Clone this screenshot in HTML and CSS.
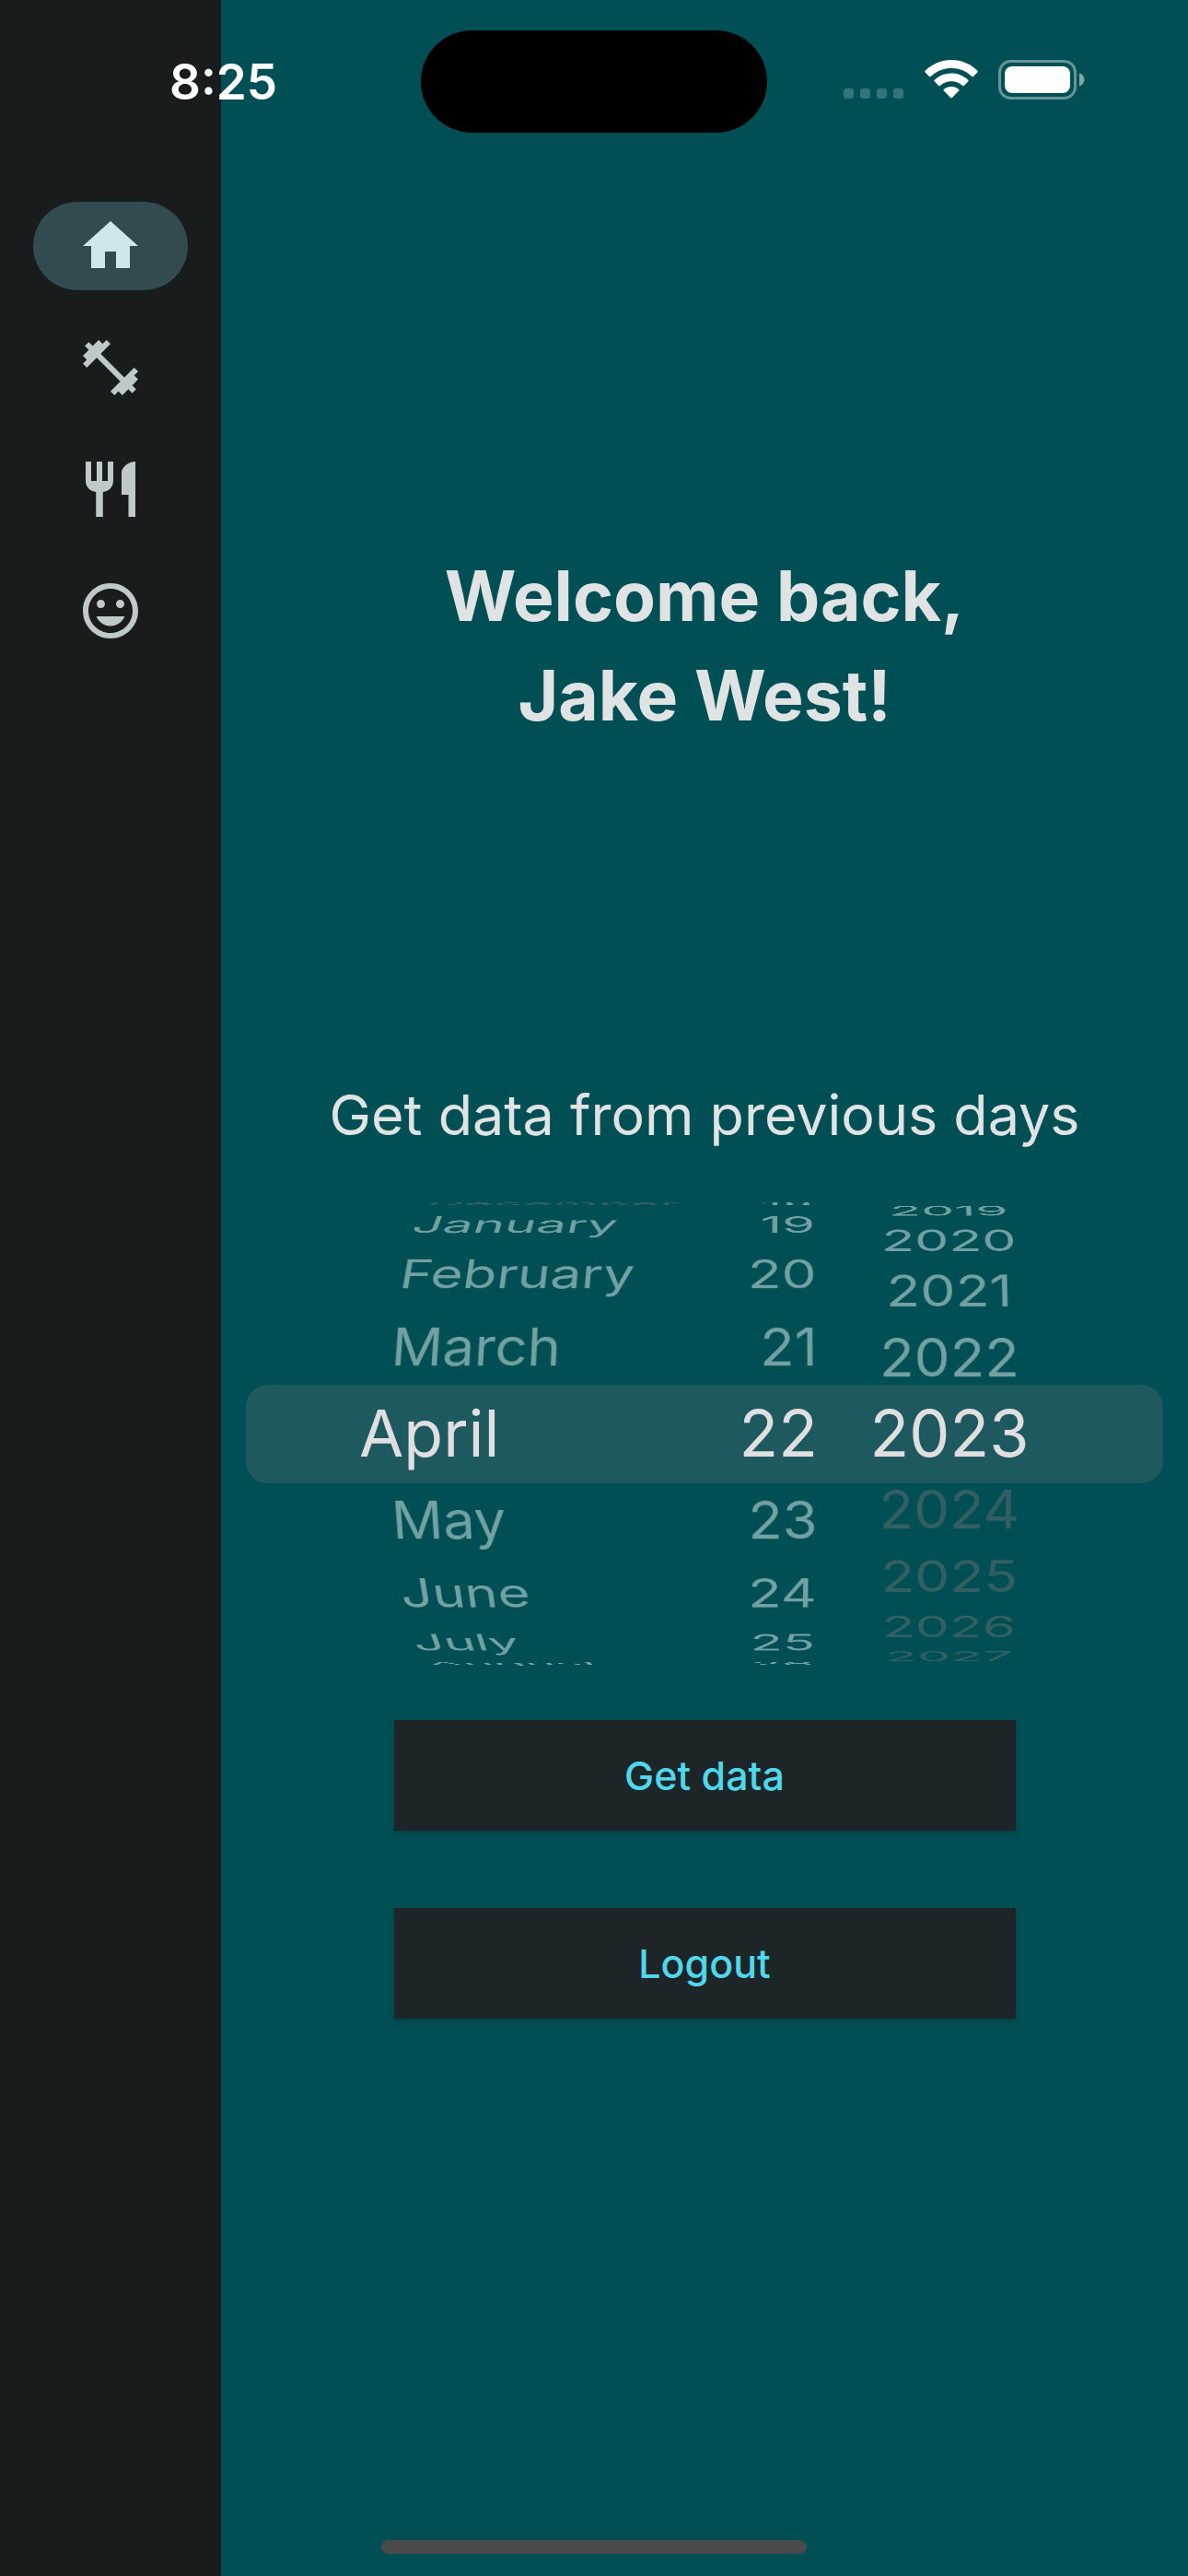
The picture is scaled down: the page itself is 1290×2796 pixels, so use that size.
FILE: index.html
```
<!DOCTYPE html>
<html lang="en">
<head>
<meta charset="utf-8">
<meta name="viewport" content="width=device-width, initial-scale=1">
<title>Home</title>
<link rel="stylesheet" href="styles.css">
</head>
<body>
<header class="status">
  <time class="status-time">8:25</time>
  <span class="island"></span>
  <div class="status-icons">
    <svg width="66" height="44" viewBox="0 0 66 44" aria-hidden="true"><g fill="#33737a"><rect x="0" y="31" width="11" height="11" rx="3"/><rect x="18" y="31" width="11" height="11" rx="3"/><rect x="36" y="31" width="11" height="11" rx="3"/><rect x="54" y="31" width="11" height="11" rx="3"/></g></svg>
    <svg width="58" height="44" viewBox="0 0 58 44" aria-hidden="true"><g fill="#fff"><path d="M29 0C18 0 8 4.500 .6 11.700q-.8.900 0 1.800L5 17.900q.8.800 1.700 0C12.700 12.200 20.500 9 29 9s16.300 3.200 22.300 8.900q.9.800 1.700 0l4.400-4.400q.8-.9 0-1.800C50 4.500 40 0 29 0z"/><path d="M29 14.500c-7 0-13.400 2.700-18.200 7.200q-.9.900 0 1.800l4.300 4.400q.8.800 1.700 0C20 25 24.300 23.300 29 23.300s9 1.700 12.200 4.600q.9.800 1.700 0l4.300-4.400q.9-.9 0-1.800C42.400 17.200 36 14.500 29 14.500z"/><path d="M29 29c-3 0-5.900 1.100-8.100 2.900q-1 .8-.1 1.700l7.300 7.500q.9.900 1.800 0l7.300-7.500q.9-.9-.1-1.700C34.900 30.100 32 29 29 29z"/></g></svg>
    <svg width="94" height="44" viewBox="0 0 94 44" aria-hidden="true"><rect x="1.500" y="1.500" width="82" height="40" rx="12" fill="none" stroke="#669599" stroke-width="3"/><rect x="7" y="7" width="71" height="29" rx="8" fill="#fff"/><path d="M88 14.500c3.500 1 5.500 3.800 5.500 7s-2 6-5.500 7z" fill="#80a7a9"/></svg>
  </div>
</header>

<div class="app">
  <nav class="rail" aria-label="Main">
    <a class="rail-link rail-link-active" href="#home" aria-label="Home" aria-current="page"><svg class="icon" viewBox="0 0 24 24"><path d="M10 20v-6h4v6h5v-8h3L12 3 2 12h3v8z"/></svg></a>
    <a class="rail-link" href="#workouts" aria-label="Workouts"><svg class="icon" viewBox="0 0 24 24"><path d="M20.570 14.860L22 13.430 20.570 12 17 15.570 8.430 7 12 3.430 10.570 2 9.140 3.430 7.710 2 5.570 4.140 4.140 2.710 2.710 4.140l1.430 1.430L2 7.710l1.430 1.430L2 10.570 3.430 12 7 8.430 15.570 17 12 20.570 13.430 22l1.430-1.430L16.290 22l2.140-2.140 1.430 1.430 1.430-1.430-1.430-1.430L22 16.290z"/></svg></a>
    <a class="rail-link" href="#meals" aria-label="Meals"><svg class="icon" viewBox="0 0 24 24"><path d="M11 9H9V2H7v7H5V2H3v7c0 2.120 1.660 3.840 3.750 3.970V22h2.500v-9.030C11.340 12.840 13 11.120 13 9V2h-2v7zm5-3v8h2.500v8H21V2c-2.760 0-5 2.240-5 4z"/></svg></a>
    <a class="rail-link" href="#mood" aria-label="Mood"><svg class="icon" viewBox="0 0 24 24"><path d="M11.990 2C6.470 2 2 6.480 2 12s4.470 10 9.990 10C17.520 22 22 17.520 22 12S17.520 2 11.990 2zM12 20c-4.420 0-8-3.580-8-8s3.580-8 8-8 8 3.580 8 8-3.580 8-8 8zm3.500-9c.83 0 1.500-.67 1.500-1.500S16.330 8 15.500 8 14 8.670 14 9.500s.67 1.500 1.500 1.500zm-7 0c.83 0 1.500-.67 1.500-1.500S9.330 8 8.500 8 7 8.670 7 9.500 7.670 11 8.500 11zm3.500 6.500c2.330 0 4.310-1.460 5.110-3.500H6.890c.8 2.040 2.780 3.500 5.110 3.500z"/></svg></a>
  </nav>

  <main class="main">
    <h1 class="welcome">Welcome back,<br>Jake West!</h1>
    <h2 class="subtitle" id="picker-label">Get data from previous days</h2>

    <div class="picker" role="group" aria-labelledby="picker-label">
      <div class="band"></div>
      <ul class="wheel wheel-month" role="listbox" aria-label="Month">
        <li class="row row-off" style="--n: 4" role="option" aria-disabled="true">December</li>
        <li class="row" style="--n: 3" role="option">January</li>
        <li class="row" style="--n: 2" role="option">February</li>
        <li class="row" style="--n: 1" role="option">March</li>
        <li class="row row-selected" style="--n: 0" role="option" aria-selected="true">April</li>
        <li class="row" style="--n: -1" role="option">May</li>
        <li class="row" style="--n: -2" role="option">June</li>
        <li class="row" style="--n: -3" role="option">July</li>
        <li class="row" style="--n: -4" role="option">August</li>
      </ul>
      <ul class="wheel wheel-day" role="listbox" aria-label="Day">
        <li class="row" style="--n: 4" role="option">18</li>
        <li class="row" style="--n: 3" role="option">19</li>
        <li class="row" style="--n: 2" role="option">20</li>
        <li class="row" style="--n: 1" role="option">21</li>
        <li class="row row-selected" style="--n: 0" role="option" aria-selected="true">22</li>
        <li class="row" style="--n: -1" role="option">23</li>
        <li class="row" style="--n: -2" role="option">24</li>
        <li class="row" style="--n: -3" role="option">25</li>
        <li class="row" style="--n: -4" role="option">26</li>
      </ul>
      <ul class="wheel wheel-year" role="listbox" aria-label="Year">
        <li class="row" style="--n: 4" role="option">2019</li>
        <li class="row" style="--n: 3" role="option">2020</li>
        <li class="row" style="--n: 2" role="option">2021</li>
        <li class="row" style="--n: 1" role="option">2022</li>
        <li class="row row-selected" style="--n: 0" role="option" aria-selected="true">2023</li>
        <li class="row row-off" style="--n: -1" role="option" aria-disabled="true">2024</li>
        <li class="row row-off" style="--n: -2" role="option" aria-disabled="true">2025</li>
        <li class="row row-off" style="--n: -3" role="option" aria-disabled="true">2026</li>
        <li class="row row-off" style="--n: -4" role="option" aria-disabled="true">2027</li>
      </ul>
    </div>

    <div class="actions">
      <button class="button" type="button">Get data</button>
      <button class="button" type="button">Logout</button>
    </div>
  </main>
</div>
<div class="home-indicator"></div>
</body>
</html>
```
FILE: styles.css
```
* {
  box-sizing: border-box;
}

body {
  margin: 0;
  background: #004f54;
  color: #e0e3e3;
  font-family: Inter, "Liberation Sans", sans-serif;
}

.app {
  display: flex;
  min-height: 100vh;
}

/* Status bar floats over both the rail and the page */
.status {
  position: absolute;
  top: 33px;
  left: 0;
  right: 0;
  display: grid;
  grid-template-columns: 1fr auto 1fr;
  align-items: center;
  color: #fff;
}

.status-time {
  padding-left: 184px;
  font-size: 53px;
  line-height: 60px;
  font-weight: 600;
}

.island {
  width: 376px;
  height: 111px;
  border-radius: 56px;
  background: #000;
}

.status-icons {
  display: flex;
  justify-content: flex-end;
  gap: 22px;
  padding-right: 112px;
  padding-bottom: 4px;
}

.rail {
  display: flex;
  flex-direction: column;
  align-items: center;
  gap: 36px;
  flex: 0 0 240px;
  padding-top: 219px;
  background: #191c1d;
}

.rail-link {
  display: flex;
  align-items: center;
  justify-content: center;
  width: 168px;
  height: 96px;
  border-radius: 48px;
  color: #bfc8ca;
}

.rail-link-active {
  background: #334b4f;
  color: #cde7ec;
}

.icon {
  width: 72px;
  height: 72px;
  fill: currentColor;
}

.main {
  flex: 1;
  min-width: 0;
  padding: 593px 27px 120px;
  text-align: center;
}

.welcome {
  margin: 0;
  font-size: 75px;
  line-height: 108px;
  font-weight: 700;
}

.subtitle {
  margin: 365px 0 58px;
  font-size: 61px;
  line-height: 72px;
  font-weight: 400;
}

/* Date picker: three cylinders behind one highlighted band */
.picker {
  display: grid;
  grid-template-columns: 155px 1fr 140px 38px 210px 127px;
  align-items: center;
  height: 504px;
}

.band {
  grid-column: 1 / -1;
  grid-row: 1;
  height: 107px;
  border-radius: 24px;
  background: #1e595f;
}

.wheel {
  --step: 19.5deg;
  display: grid;
  grid-row: 1;
  margin: 0;
  padding: 0;
  list-style: none;
  perspective: 2000px;
}

.wheel-month {
  grid-column: 2;
  text-align: left;
  perspective-origin: 418px 50%;
}

.wheel-day {
  grid-column: 3;
  text-align: right;
  perspective-origin: 96px 50%;
}

.wheel-year {
  --step: 17deg;
  grid-column: 5;
  text-align: center;
  perspective-origin: 94px 50%;
}

.row {
  grid-area: 1 / 1;
  color: #73a0a3;
  font-size: 62px;
  line-height: 96px;
  white-space: nowrap;
  transform: translateZ(-284px) rotateX(calc(var(--step) * var(--n))) translateZ(284px);
}

.row-selected {
  color: #dfdfe1;
  font-size: 70px;
}

.wheel-month .row-selected {
  margin-left: -32px;
}

.row-off {
  color: #335f62;
}

.actions {
  display: flex;
  flex-direction: column;
  align-items: center;
  gap: 84px;
  margin-top: 59px;
}

.button {
  width: 675px;
  max-width: 100%;
  height: 120px;
  border: 0;
  padding: 0;
  background: #1d2528;
  box-shadow: 0 3px 6px rgba(0, 0, 0, 0.2);
  color: #4fd8eb;
  font: 500 43px/60px Inter, "Liberation Sans", sans-serif;
}

.home-indicator {
  position: fixed;
  bottom: 24px;
  left: 50%;
  width: 462px;
  height: 15px;
  margin-left: -231px;
  border-radius: 8px;
  background: #4a4a4a;
}
```
